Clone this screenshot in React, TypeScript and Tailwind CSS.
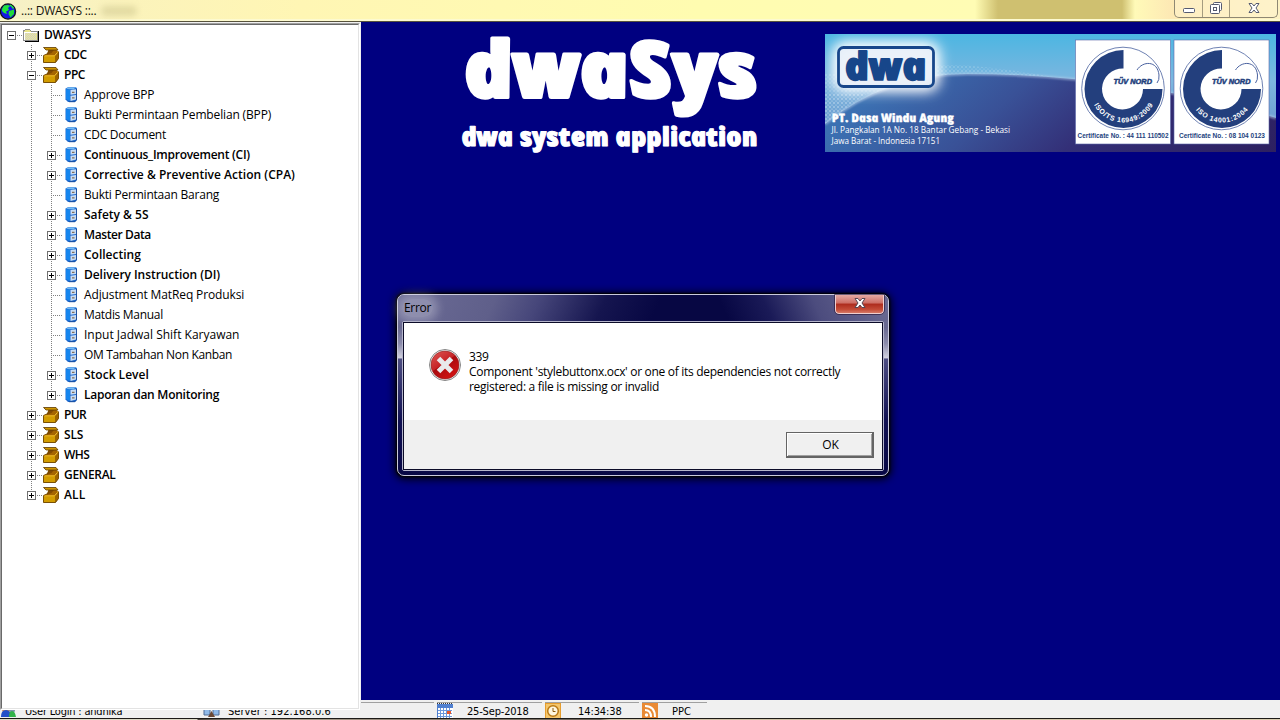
import React from "react";

type TreeNode = {
  label: string;
  level: 0 | 1 | 2;
  box?: "plus" | "minus";
  fit: string;
};

const nodes: TreeNode[] = [
  { label: "DWASYS", level: 0, box: "minus", fit: "tracking-[-0.2px]" },
  { label: "CDC", level: 1, box: "plus", fit: "tracking-[-0.5px]" },
  { label: "PPC", level: 1, box: "minus", fit: "tracking-[-0.5px]" },
  { label: "Approve BPP", level: 2, fit: "tracking-[-0.2px]" },
  { label: "Bukti Permintaan Pembelian (BPP)", level: 2, fit: "tracking-[-0.15px]" },
  { label: "CDC Document", level: 2, fit: "tracking-[-0.3px]" },
  { label: "Continuous_Improvement (CI)", level: 2, box: "plus", fit: "tracking-[-0.26px]" },
  { label: "Corrective & Preventive Action (CPA)", level: 2, box: "plus", fit: "tracking-[0.02px]" },
  { label: "Bukti Permintaan Barang", level: 2, fit: "tracking-[-0.22px]" },
  { label: "Safety & 5S", level: 2, box: "plus", fit: "tracking-[0px]" },
  { label: "Master Data", level: 2, box: "plus", fit: "tracking-[-0.4px]" },
  { label: "Collecting", level: 2, box: "plus", fit: "tracking-[0px]" },
  { label: "Delivery Instruction (DI)", level: 2, box: "plus", fit: "tracking-[-0.05px]" },
  { label: "Adjustment MatReq Produksi", level: 2, fit: "tracking-[-0.12px]" },
  { label: "Matdis Manual", level: 2, fit: "tracking-[-0.3px]" },
  { label: "Input Jadwal Shift Karyawan", level: 2, fit: "tracking-[0px]" },
  { label: "OM Tambahan Non Kanban", level: 2, fit: "tracking-[-0.34px]" },
  { label: "Stock Level", level: 2, box: "plus", fit: "tracking-[0px]" },
  { label: "Laporan dan Monitoring", level: 2, box: "plus", fit: "tracking-[-0.25px]" },
  { label: "PUR", level: 1, box: "plus", fit: "tracking-[-0.7px]" },
  { label: "SLS", level: 1, box: "plus", fit: "tracking-[-0.2px]" },
  { label: "WHS", level: 1, box: "plus", fit: "tracking-[-0.6px]" },
  { label: "GENERAL", level: 1, box: "plus", fit: "tracking-[-0.3px]" },
  { label: "ALL", level: 1, box: "plus", fit: "tracking-[0.1px]" },
];

function Branch({ box, up, down }: { box?: "plus" | "minus"; up: boolean; down: boolean }) {
  return (
    <svg width="20" height="20" className="shrink-0" shapeRendering="crispEdges">
      {up && <path d="M9.5 0V10" stroke="#808080" strokeDasharray="1 1" />}
      {down && <path d="M9.5 10V20" stroke="#808080" strokeDasharray="1 1" />}
      <path d="M11 10.5H20" stroke="#808080" strokeDasharray="1 1" />
      {box && (
        <>
          <rect x="5.5" y="6.5" width="8" height="8" fill="#fff" stroke="#707070" />
          <path d="M7 10.5H12" stroke="#000" />
          {box === "plus" && <path d="M9.5 8V13" stroke="#000" />}
        </>
      )}
    </svg>
  );
}

function Guide() {
  return (
    <svg width="20" height="20" className="shrink-0" shapeRendering="crispEdges">
      <path d="M9.5 0V20" stroke="#808080" strokeDasharray="1 1" />
    </svg>
  );
}

function FolderIcon() {
  return (
    <svg width="20" height="20" className="shrink-0" shapeRendering="crispEdges">
      <path d="M3 16.5H16.500V6" fill="none" stroke="#000" />
      <path d="M1.500 15.500V6L3.500 4.500H7.500L9.500 6.500H15.500V15.500Z" fill="#e8e48a" stroke="#8a8a8a" />
      <path d="M3.500 15V8M5.500 15V8M7.500 15V8M9.500 15V8M11.500 15V8M13.500 15V8" stroke="#d2d2d2" strokeDasharray="1 1" />
      <path d="M4.500 14V9M6.500 14V9M8.500 14V9M10.500 14V9M12.500 14V9" stroke="#d2d2d2" strokeDasharray="1 1" />
      <path d="M2.500 15V7.500H15" fill="none" stroke="#fff" />
    </svg>
  );
}

function BoxIcon() {
  return (
    <svg width="20" height="20" className="shrink-0">
      <path d="M6.500 5H14.500L16.500 7V13.500L13.500 17.500H1.500V10.500L5.500 8.500Z" fill="#c89000" />
      <path d="M7 5H14.500L15.500 7L12.500 10.500H4Z" fill="#a46400" />
      <path d="M7 5H12L9.500 8L5 9.800Z" fill="#824a00" />
      <path d="M13 11L16.500 6.500V13.500L13.500 17.500H13Z" fill="#9d6500" />
      <rect x="1.500" y="11" width="11.500" height="6.500" fill="#d29c00" />
      <path d="M2 10.800H12.500L15.500 7.500" fill="none" stroke="#f0bb2c" />
      <path d="M16.500 6.500V13.500L13.500 17.500H1.500V10.500L6 8.500L6.500 5.500" fill="none" stroke="#6e4500" strokeWidth=".9" />
      <path d="M1.500 2.500H14L16 5H4Z" fill="#cf9600" stroke="#5d3a00" strokeWidth=".8" />
    </svg>
  );
}

function CabinetIcon() {
  return (
    <svg width="20" height="20" className="shrink-0">
      <path d="M3.500 3.500L6 2.200H14L15 3.500V15L13 17H6L3.500 14.500Z" fill="#1c68cf" />
      <path d="M4 4L8 5V16L4 14Z" fill="#1585ee" />
      <path d="M4 3.400L6 2.500H14L11.500 4.200H7Z" fill="#76bdf5" />
      <path d="M8.500 5L14 4.200V9L8.500 9.800Z" fill="#c7dcf4" />
      <path d="M8.500 10.800L14 10V14.500L8.500 16Z" fill="#c7dcf4" />
      <path d="M10 7.300H12.500M10 12.800H12.500" stroke="#7e6d5c" strokeWidth="1.300" />
      <path d="M14.500 4V15L12.500 16.700H7" fill="none" stroke="#1c4e9c" />
    </svg>
  );
}

function TreeRow({ node, index }: { node: TreeNode; index: number }) {
  const next = nodes[index + 1];
  const continues =
    node.level === 2 ? next?.level === 2 : node.level === 1 ? index < nodes.length - 1 : false;
  return (
    <div className="flex h-5 items-center">
      {node.level === 1 && <span className="w-5 shrink-0" />}
      {node.level === 2 && (
        <>
          <span className="w-5 shrink-0" />
          <Guide />
        </>
      )}
      <Branch box={node.box} up={node.level > 0} down={continues} />
      {node.level === 0 ? <FolderIcon /> : node.level === 1 ? <BoxIcon /> : <CabinetIcon />}
      <span
        className={`pl-0.5 text-[12px] leading-5 whitespace-pre text-black ${node.box ? "font-semibold" : ""} ${node.fit}`}
      >
        {node.label}
      </span>
    </div>
  );
}

function TitleBar() {
  return (
    <header className="flex h-[22px] items-start justify-between border-b border-[#57533c] bg-[linear-gradient(90deg,#f5f0c8_0px,#fbf3bb_130px,#fff6b4_300px,#fffcb0_700px,#fffcb4_975px,#cfc070_998px,#cfc070_1122px,#fffab8_1135px,#fde9b4_1170px,#fdf2c4_1280px)] shadow-[inset_0_-2px_0_#fdfad0]">
      <div className="flex h-[21px] items-center">
        <svg width="17" height="20" viewBox="0 0 17 20">
          <circle cx="8" cy="10.500" r="7.600" fill="#1218e6" stroke="#111" strokeWidth="1.300" />
          <path d="M2 8L4 4.500L8 4L10 5L8 7L9 9L6 10.500L7 13L4 12L2 10Z" fill="#22e63c" />
          <path d="M9 10L14 8.500L14 13L10.500 16.500L8.500 13Z" fill="#22d83c" />
          <path d="M10 4L12 5.500L13.500 7.500" stroke="#22e63c" strokeWidth="1.500" fill="none" />
        </svg>
        <span className="pl-1 text-[12px] tracking-[-0.2px] whitespace-pre text-[#14140c]">..:: DWASYS ::..</span>
        <span className="ml-1 h-2.5 w-9 rounded-full bg-[#9d9258]/25 blur-[3px]" />
      </div>
      <div className="mr-0.5 flex h-[18px] w-[104px] rounded-b-[5px] border border-t-0 border-[#8f8873] bg-[#fff4cf]/50">
        <div className="flex w-7 items-center justify-center border-r border-[#a59c80]">
          <svg width="14" height="8"><rect x="1.5" y="3.5" width="11" height="4" rx="1" fill="#fff" stroke="#555a70" /></svg>
        </div>
        <div className="flex w-[27px] items-start justify-center border-r border-[#a59c80] pt-px">
          <svg width="14" height="14" fill="#fff" stroke="#555a70">
            <rect x="4.500" y="1.500" width="8" height="8" rx="1" />
            <rect x="1.500" y="3.500" width="9" height="9" rx="1" />
            <rect x="4.500" y="6.500" width="3" height="3" />
          </svg>
        </div>
        <div className="flex flex-1 items-start justify-center pt-0.5">
          <svg width="14" height="12" viewBox="0 0 14 12">
            <path d="M2 1.500H5L7 4L9 1.500H12L9 6L12 10.500H9L7 8L5 10.500H2L5 6Z" fill="#fff" stroke="#555a70" />
          </svg>
        </div>
      </div>
    </header>
  );
}

function Brand() {
  return (
    <svg width="320" height="150" className="ml-[95px] shrink-0 overflow-visible" fill="#fff" stroke="#fff" strokeLinejoin="round" fontFamily="'Open Sans', sans-serif" fontWeight="800" fontStyle="italic">
      <text transform="translate(12.500 75) skewX(12)" fontSize="77" strokeWidth="4" textLength="294" lengthAdjust="spacingAndGlyphs">dwaSys</text>
      <text transform="translate(7 124) skewX(12)" fontSize="26" strokeWidth="1.200" textLength="296" lengthAdjust="spacingAndGlyphs">dwa system application</text>
    </svg>
  );
}

function Certificate({ x, iso, isoLength, no, noX, noLength }: { x: number; iso: string; isoLength: number; no: string; noX: number; noLength: number }) {
  const id = `arc-${x}`;
  return (
    <g transform={`translate(${x} 6)`}>
      <rect width="95" height="104" fill="#fff" stroke="#5a67a8" strokeWidth=".6" />
      <circle cx="47.500" cy="48.500" r="41.300" fill="none" stroke="#4a62a0" strokeWidth=".8" />
      <path d="M48 10A39 39 0 1 0 87 49H67.500A20.500 20.500 0 1 1 48 28.500Z" fill="#233f7d" />
      <path d="M61.500 30C67 21 82 20 83.500 35Q84 40 81.500 43" fill="none" stroke="#4a62a0" strokeWidth="1" />
      <text x="38" y="43.500" fontSize="7.500" fontWeight="700" fontStyle="italic" fill="#233f7d" stroke="#233f7d" strokeWidth=".5" textLength="38.500" lengthAdjust="spacingAndGlyphs">TÜV NORD</text>
      <path id={id} d="M14.500 49A33.500 33.500 0 0 0 81.500 49" fill="none" />
      <text fontSize="7" fontWeight="700" fill="#fff" textAnchor="middle">
        <textPath href={`#${id}`} startOffset="50%" textLength={isoLength}>{iso}</textPath>
      </text>
      <text x={noX} y="98" fontSize="6.500" fontWeight="700" fill="#233f7d" textLength={noLength} lengthAdjust="spacingAndGlyphs">{no}</text>
    </g>
  );
}

function Banner() {
  return (
    <svg width="451" height="118" viewBox="0 0 451 118" className="mt-3 mr-1 shrink-0" fontFamily="'Liberation Sans', sans-serif">
      <defs>
        <linearGradient id="sky" x1="0" y1="0" x2="0" y2="1">
          <stop offset="0" stopColor="#4cb6e2" />
          <stop offset=".4" stopColor="#7db6df" />
          <stop offset=".8" stopColor="#6a9ccf" />
        </linearGradient>
        <linearGradient id="globe" x1="0" y1=".8" x2="1" y2="1">
          <stop offset="0" stopColor="#3b70b2" />
          <stop offset=".3" stopColor="#395197" />
          <stop offset=".55" stopColor="#332f77" />
          <stop offset="1" stopColor="#2d2060" />
        </linearGradient>
        <pattern id="dots" width="4" height="4" patternUnits="userSpaceOnUse">
          <circle cx="1" cy="1" r=".7" fill="#fff" fillOpacity=".4" />
          <circle cx="3" cy="3" r=".6" fill="#fff" fillOpacity=".3" />
        </pattern>
        <filter id="glow" x="-40%" y="-60%" width="180%" height="220%"><feGaussianBlur stdDeviation="7" /></filter>
        <filter id="soft"><feGaussianBlur stdDeviation="1.200" /></filter>
      </defs>
      <rect width="451" height="118" fill="url(#sky)" />
      <path d="M60 45Q90 30 130 31T250 47V60H0V90Z" fill="url(#dots)" />
      <path d="M0 40H60L30 72L0 95Z" fill="url(#dots)" />
      <path d="M0 90Q62 40 142 40Q300 40 451 84V118H0Z" fill="url(#globe)" />
      <path d="M0 90Q62 40 142 40Q300 40 451 84" fill="none" stroke="#b4cde9" strokeWidth="2" strokeOpacity=".75" filter="url(#soft)" />
      <rect x="8" y="8" width="106" height="49" rx="12" fill="#fff" filter="url(#glow)" />
      <rect x="12" y="12" width="98" height="42" rx="9" fill="#fff" fillOpacity=".6" filter="url(#glow)" />
      <rect x="13.500" y="13.500" width="95" height="39" rx="5" fill="#e6eef8" fillOpacity=".8" stroke="#17468a" strokeWidth="2.800" />
      <g fontFamily="'Open Sans', sans-serif" fontWeight="800" fontStyle="italic" strokeLinejoin="round">
        <text transform="translate(22 45.500) skewX(12)" fontSize="38.500" fill="#17468a" stroke="#17468a" strokeWidth="1.600" textLength="82" lengthAdjust="spacingAndGlyphs">dwa</text>
        <text transform="translate(7.500 88) skewX(12)" fontSize="11.500" fill="#fff" stroke="#fff" strokeWidth=".4" textLength="122" lengthAdjust="spacingAndGlyphs">PT. Dasa Windu Agung</text>
      </g>
      <g fontFamily="'Open Sans', sans-serif" fontSize="8.300" fill="#fff" fontWeight="500">
        <text x="6.500" y="99" textLength="178.500" lengthAdjust="spacingAndGlyphs">Jl. Pangkalan 1A No. 18 Bantar Gebang - Bekasi</text>
        <text x="6.500" y="110" textLength="108.500" lengthAdjust="spacingAndGlyphs">Jawa Barat - Indonesia 17151</text>
      </g>
      <Certificate x={250.5} iso="ISO/TS 16949:2009" isoLength={72} no="Certificate No. : 44 111 110502" noX={2} noLength={91} />
      <Certificate x={349} iso="ISO 14001:2004" isoLength={60} no="Certificate No. : 08 104 0123" noX={5} noLength={86} />
    </svg>
  );
}

function ErrorDialog() {
  return (
    <div
      role="dialog"
      aria-label="Error"
      className="absolute top-[294px] left-[397px] z-20 flex h-[182px] w-[492px] flex-col rounded-[7px] border border-[#c9c9dc] bg-[#080845] bg-[linear-gradient(180deg,#686893_0%,#686890_18%,#8b8bab_27%,#d2d2df_35%,#4d4d82_35.5%,#101052_70%,#080845_100%)] shadow-[0_1px_9px_2px_#000,0_0_2px_1px_#000]"
    >
      <div className="flex h-[26px] shrink-0 items-start justify-between rounded-t-[6px] bg-[#070743] bg-[linear-gradient(115deg,#6c6c96_0px,#5f5f8a_90px,#46467a_130px,#15154f_190px,#07074300_240px),linear-gradient(65deg,#07074300_300px,#1a1a57_340px,#4c4c7e_385px,#66668f_440px,#70709a_490px)]">
        <span className="mt-1 ml-1 rounded-full bg-white/25 px-0.5 text-[12px] leading-[18px] tracking-[-0.3px] text-black shadow-[0_0_9px_5px_rgba(255,255,255,0.25)]">
          Error
        </span>
        <div className="mr-[4px] flex h-[19px] w-[49px] items-start justify-center rounded-b-[4px] border border-t-0 border-[#efcfcf] bg-[linear-gradient(180deg,#e4aaa4_0%,#cd6d64_45%,#ad2b1d_50%,#c34b37_80%,#d67865_100%)] pt-0.5 pl-px outline outline-[#2a1234]/60">
          <svg width="14" height="12" viewBox="0 0 14 12">
            <path d="M2 1.500H5L7 4L9 1.500H12L9 6L12 10.500H9L7 8L5 10.500H2L5 6Z" fill="#fff" stroke="#574753" />
          </svg>
        </div>
      </div>
      <div className="mx-[4px] mb-[4px] flex min-h-0 flex-1 flex-col rounded-[2px] border border-[#b5b5cb]">
        <div className="flex min-h-0 flex-1 flex-col border border-[#0b0b28] bg-white">
          <div className="flex h-[97px] shrink-0 items-start pt-[25px] pl-6">
            <svg width="34" height="34" viewBox="0 0 34 34" className="shrink-0">
              <defs>
                <linearGradient id="red" x1="0" y1="0" x2=".7" y2="1">
                  <stop offset="0" stopColor="#df5b58" />
                  <stop offset=".5" stopColor="#c62326" />
                  <stop offset=".52" stopColor="#a90a0d" />
                  <stop offset="1" stopColor="#d31313" />
                </linearGradient>
              </defs>
              <circle cx="17" cy="17" r="15.500" fill="#f4f4f4" stroke="#858585" />
              <circle cx="17" cy="17" r="14" fill="url(#red)" stroke="#8d2020" strokeWidth=".6" />
              <path d="M10.500 10.500L23.500 23.500M23.500 10.500L10.500 23.500" stroke="#e9e9ec" strokeWidth="5" />
            </svg>
            <p className="pt-px pl-[7px] text-[12px] leading-[15px] tracking-[-0.3px] whitespace-pre text-black">
              {"339\nComponent 'stylebuttonx.ocx' or one of its dependencies not correctly\nregistered: a file is missing or invalid"}
            </p>
          </div>
          <div className="flex flex-1 items-start justify-end bg-[#f0f0f0] pt-3 pr-2">
            <button className="h-[26px] w-[88px] border border-r-2 border-b-2 border-[#646464] bg-[#f0f0f0] pl-0.5 text-[12px] leading-5 text-black shadow-[inset_1px_1px_0_#fff,inset_-1px_-1px_0_#a0a0a0]">
              OK
            </button>
          </div>
        </div>
      </div>
    </div>
  );
}

function StatusBar() {
  return (
    <footer className="flex h-[18px] items-stretch overflow-hidden bg-[#f0f0f0] pt-0.5 text-[11px] leading-[18px] whitespace-pre text-black [font-family:'DejaVu_Sans_Condensed','DejaVu_Sans',sans-serif]">
      <div className="flex w-[200px] border-t border-[#a0a0a0]">
        <svg width="18" height="16">
          <circle cx="6" cy="6" r="4" fill="#c98b61" /><path d="M1 14Q1 7 6 7T11 14Z" fill="#2350c8" />
          <circle cx="12" cy="7" r="3" fill="#7c94a9" /><path d="M9 14Q9 8 12 8T16 14Z" fill="#32b34a" />
        </svg>
        <span className="pl-[7px] tracking-[-0.2px]">User Login : andhika</span>
      </div>
      <div className="flex w-[234px] border-t border-[#a0a0a0]">
        <svg width="18" height="16" className="ml-[3px]">
          <path d="M1 5H7V12H1ZM10 5H16V12H10Z" fill="#8fb9e8" stroke="#506d96" /><path d="M5 14L8.500 8L12 14" fill="#6b4936" />
        </svg>
        <span className="pl-[7px] tracking-[0.05px]">Server : 192.168.0.6</span>
      </div>
      <div className="ml-[3px] flex w-[105px] border-t border-[#a0a0a0]">
        <svg width="16" height="15" shapeRendering="crispEdges">
          <rect y="1" width="16" height="14" fill="#4f7fcf" />
          <path d="M0 .5H16" stroke="#333" strokeDasharray="1 1" />
          <path d="M1 5H16V15H1Z" fill="#fff" />
          <path d="M1 7.500H15M1 10.500H15M1 13.500H15M3.500 5V15M6.500 5V15M9.500 5V15M12.500 5V15" stroke="#6c98dc" />
          <rect x="10" y="8" width="4" height="3" fill="#e4572e" />
        </svg>
        <span className="pl-3.5 tracking-[-0.18px]">25-Sep-2018</span>
      </div>
      <div className="ml-[3px] flex w-[94px] border-t border-[#a0a0a0]">
        <svg width="16" height="15">
          <rect width="16" height="16" fill="#e69d2e" /><rect x="1" y="1" width="14" height="14" fill="#f4c66c" />
          <circle cx="8" cy="8" r="5.300" fill="#fff7df" stroke="#b97915" strokeWidth="1.500" />
          <path d="M8 5V8.500H10.500" fill="none" stroke="#8a5a10" />
        </svg>
        <span className="pl-[17px] tracking-[-0.1px]">14:34:38</span>
      </div>
      <div className="ml-[3px] flex w-[65px] border-t border-[#a0a0a0]">
        <svg width="16" height="15">
          <rect width="16" height="16" fill="#e98a35" />
          <g fill="none" stroke="#fff" strokeWidth="2"><path d="M3 7Q9 7 9 14M3 3Q13 3 13 14" /></g>
          <circle cx="4.500" cy="12" r="1.700" fill="#fff" />
        </svg>
        <span className="pl-3.5">PPC</span>
      </div>
    </footer>
  );
}

export default function App() {
  return (
    <div className="relative flex h-[720px] w-[1280px] flex-col overflow-hidden bg-[#f0f0f0] [font-family:'Open_Sans','Noto_Sans',sans-serif]">
      <TitleBar />
      <main className="flex h-[678px] shrink-0 items-start">
        <aside className="z-10 h-[688px] w-[361px] shrink-0 bg-[#f0f0f0] pt-px pr-px">
          <div className="h-[687px] border border-t-[#a0a0a0] border-r-white border-b-white border-l-[#a0a0a0]">
            <div className="h-[685px] border border-t-[#696969] border-r-[#e3e3e3] border-b-[#e3e3e3] border-l-[#696969] bg-white">
              {nodes.map((node, index) => (
                <TreeRow key={node.label} node={node} index={index} />
              ))}
            </div>
          </div>
        </aside>
        <section className="flex h-[678px] flex-1 items-start justify-between bg-[#000080]">
          <Brand />
          <Banner />
        </section>
      </main>
      <StatusBar />
      <div className="h-0.5 border-t border-[#1c1a17] bg-[linear-gradient(90deg,#dcd9c5_0px,#dcd9c5_197px,#4a443e_198px,#b3a693_250px,#6c6258_600px,#cdbfa4_610px,#d9ccae_1280px)]" />
      <ErrorDialog />
    </div>
  );
}
